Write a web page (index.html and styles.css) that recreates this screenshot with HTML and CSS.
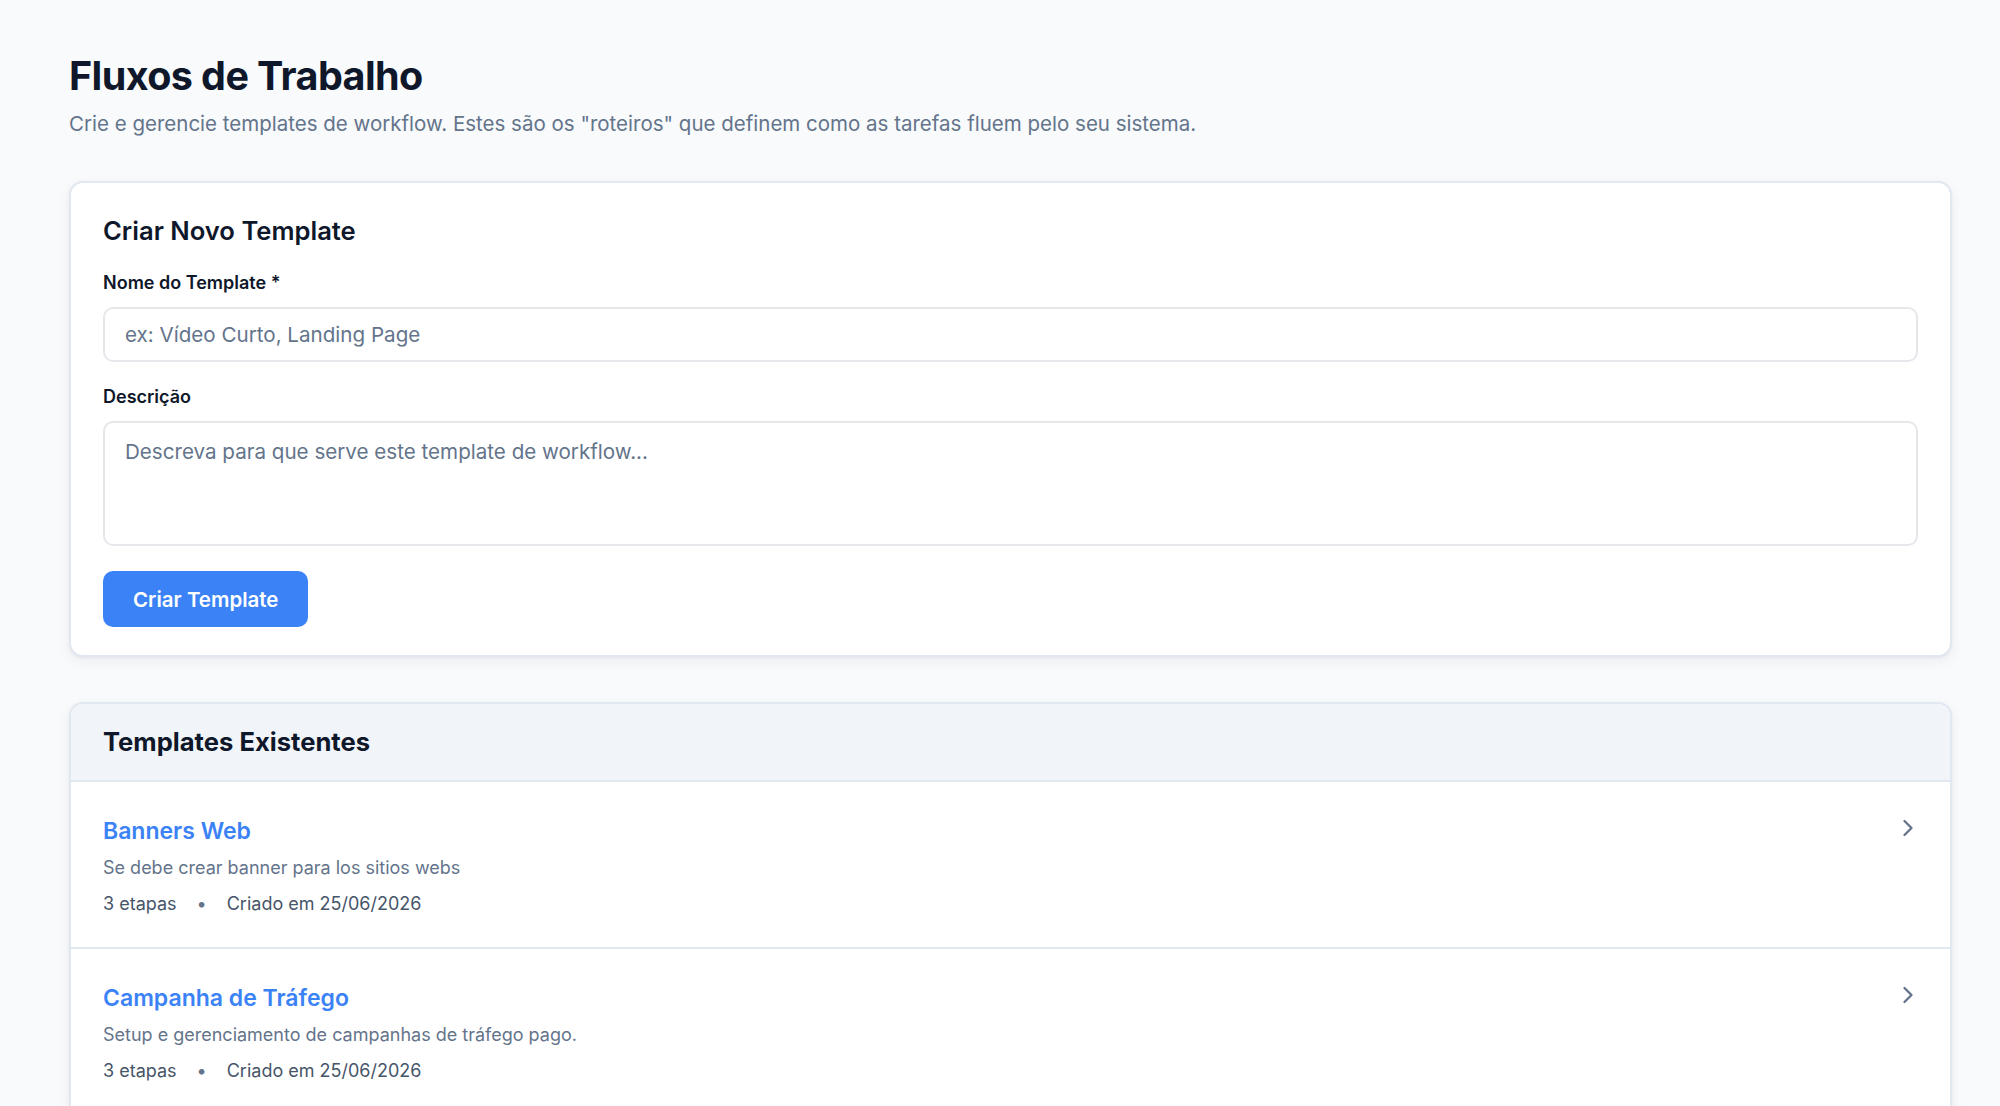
FILE: index.html
```html
<!DOCTYPE html>
<html lang="pt-BR">
<head>
<meta charset="utf-8">
<title>Fluxos de Trabalho</title>
<link rel="stylesheet" href="styles.css">
</head>
<body>
<main class="page">
  <header class="page-head">
    <h1 class="page-title">Fluxos de Trabalho</h1>
    <p class="page-sub">Crie e gerencie templates de workflow. Estes são os "roteiros" que definem como as tarefas fluem pelo seu sistema.</p>
  </header>

  <section class="card form-card">
    <h2 class="card-title">Criar Novo Template</h2>
    <form class="form">
      <div class="field">
        <label class="label" for="nome">Nome do Template *</label>
        <input class="input" id="nome" type="text" placeholder="ex: Vídeo Curto, Landing Page">
      </div>
      <div class="field">
        <label class="label" for="desc">Descrição</label>
        <textarea class="input textarea" id="desc" placeholder="Descreva para que serve este template de workflow..."></textarea>
      </div>
      <div class="actions">
        <button type="button" class="btn">Criar Template</button>
      </div>
    </form>
  </section>

  <section class="card list-card">
    <div class="list-head">
      <h2 class="list-title">Templates Existentes</h2>
    </div>
    <ul class="list">
      <li class="item">
        <div class="item-body">
          <a class="item-name" href="#">Banners Web</a>
          <p class="item-desc">Se debe crear banner para los sitios webs</p>
          <div class="item-meta"><span>3 etapas</span><span class="dot">•</span><span>Criado em 25/06/2026</span></div>
        </div>
        <svg class="chev" viewBox="0 0 24 24" fill="none" stroke="currentColor" stroke-width="2" stroke-linecap="round" stroke-linejoin="round"><path d="m9 18 6-6-6-6"/></svg>
      </li>
      <li class="item">
        <div class="item-body">
          <a class="item-name" href="#">Campanha de Tráfego</a>
          <p class="item-desc">Setup e gerenciamento de campanhas de tráfego pago.</p>
          <div class="item-meta"><span>3 etapas</span><span class="dot">•</span><span>Criado em 25/06/2026</span></div>
        </div>
        <svg class="chev" viewBox="0 0 24 24" fill="none" stroke="currentColor" stroke-width="2" stroke-linecap="round" stroke-linejoin="round"><path d="m9 18 6-6-6-6"/></svg>
      </li>
    </ul>
  </section>
</main>
</body>
</html>
```

FILE: styles.css
```css
* { box-sizing: border-box; }
html, body { margin: 0; padding: 0; }
body {
  background: #f8fafc;
  font-family: Inter, "Noto Sans", "Liberation Sans", sans-serif;
  color: #0f172a;
}
.page {
  padding: 56px 48px 40px 69px;
}
.page-head { margin-bottom: 43px; }
.page-title {
  margin: 0;
  font-size: 39.5px;
  line-height: 40px;
  font-weight: 700;
  letter-spacing: -0.6px;
  color: #0f172a;
}
.page-sub {
  margin: 14px 0 0;
  font-size: 20.5px;
  line-height: 28px;
  color: #64748b;
}
.card {
  background: #fff;
  border: 2px solid #e2e8f0;
  border-radius: 14px;
  box-shadow: 0 4px 14px rgba(15, 23, 42, 0.06), 0 1px 3px rgba(15, 23, 42, 0.05);
}
.form-card {
  padding: 32px 32px 28px;
  margin-bottom: 45px;
}
.card-title {
  margin: 0 0 24px;
  font-size: 25.6px;
  line-height: 32px;
  font-weight: 600;
  color: #0f172a;
}
.form { display: flex; flex-direction: column; }
.field { display: flex; flex-direction: column; gap: 12px; margin-bottom: 23px; }
.label {
  font-size: 18px;
  line-height: 24px;
  font-weight: 600;
  color: #0f172a;
}
.input {
  width: 100%;
  height: 55px;
  border: 2px solid #e5e7eb;
  border-radius: 10px;
  padding: 0 20px;
  font-family: inherit;
  font-size: 20.6px;
  color: #0f172a;
  background: #fff;
  outline: none;
}
.input::placeholder { color: #64748b; opacity: 1; }
.textarea {
  height: 125px;
  padding: 14px 20px;
  line-height: 30px;
  resize: none;
}
.actions { margin-top: 2px; }
.btn {
  height: 56px;
  padding: 0 30px;
  border: none;
  border-radius: 10px;
  background: #3b82f6;
  color: #fff;
  font-family: inherit;
  font-size: 20.5px;
  font-weight: 600;
  cursor: pointer;
}
.list-card { overflow: hidden; }
.list-head {
  background: #f1f5f9;
  border-bottom: 2px solid #e2e8f0;
  padding: 22px 32px;
}
.list-title {
  margin: 0;
  font-size: 25.6px;
  line-height: 32px;
  font-weight: 700;
  color: #0f172a;
}
.list { list-style: none; margin: 0; padding: 0; }
.item {
  display: flex;
  justify-content: space-between;
  align-items: flex-start;
  padding: 32px 28px 29px 32px;
  border-bottom: 2px solid #e2e8f0;
}
.item-body { display: flex; flex-direction: column; }
.item-name {
  font-size: 23px;
  line-height: 34px;
  font-weight: 600;
  color: #3b82f6;
  text-decoration: none;
}
.item-desc {
  margin: 6px 0 0;
  font-size: 18px;
  line-height: 28px;
  color: #64748b;
}
.item-meta {
  margin-top: 8px;
  display: flex;
  gap: 20px;
  font-size: 18px;
  line-height: 28px;
  color: #475569;
}
.dot { color: #64748b; }
.chev {
  width: 28px;
  height: 28px;
  color: #64748b;
  flex: none;
}
```
